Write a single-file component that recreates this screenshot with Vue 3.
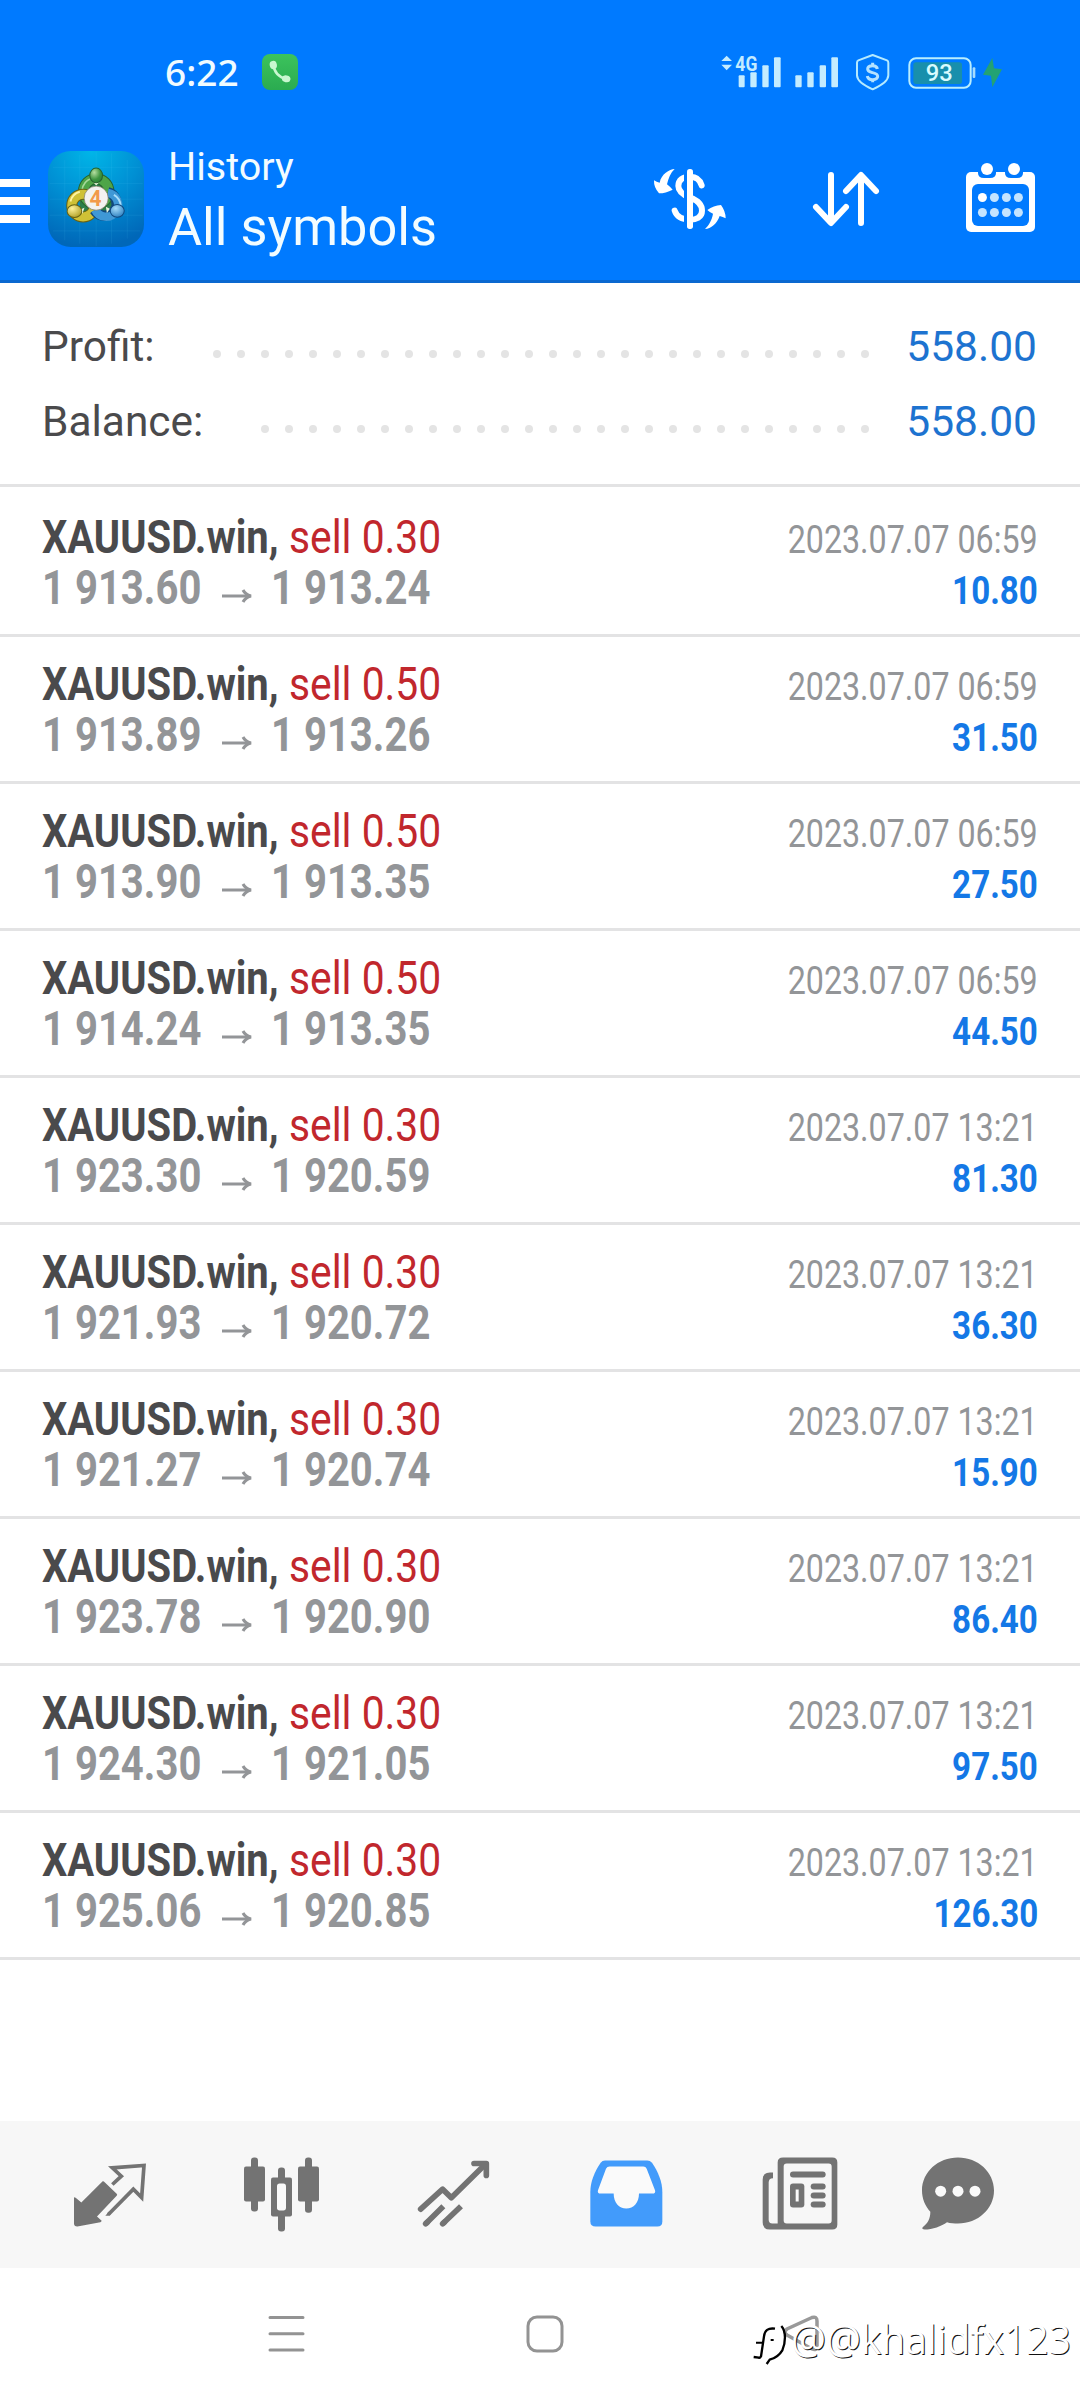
<script setup>
const summary = [
  { label: 'Profit:', value: '558.00', dots: 28 },
  { label: 'Balance:', value: '558.00', dots: 26 },
]

const deals = [
  ['0.30', '1 913.60', '1 913.24', '06:59', '10.80'],
  ['0.50', '1 913.89', '1 913.26', '06:59', '31.50'],
  ['0.50', '1 913.90', '1 913.35', '06:59', '27.50'],
  ['0.50', '1 914.24', '1 913.35', '06:59', '44.50'],
  ['0.30', '1 923.30', '1 920.59', '13:21', '81.30'],
  ['0.30', '1 921.93', '1 920.72', '13:21', '36.30'],
  ['0.30', '1 921.27', '1 920.74', '13:21', '15.90'],
  ['0.30', '1 923.78', '1 920.90', '13:21', '86.40'],
  ['0.30', '1 924.30', '1 921.05', '13:21', '97.50'],
  ['0.30', '1 925.06', '1 920.85', '13:21', '126.30'],
].map(([volume, open, close, time, profit]) => ({ volume, open, close, time, profit }))
</script>

<template>
  <div class="screen">
    <header class="header">
      <div class="status">
        <span class="clock">6:22</span>
        <svg class="call" width="36" height="36" viewBox="0 0 36 36">
          <defs>
            <linearGradient id="callBg" x1="0" y1="0" x2="0" y2="1">
              <stop offset="0" stop-color="#3cc35c" />
              <stop offset="1" stop-color="#2bab50" />
            </linearGradient>
          </defs>
          <rect width="36" height="36" rx="8" fill="url(#callBg)" />
          <path d="M11.5 10.5C12 18 17 23.5 25.5 25.5" fill="none" stroke="#c9f7d0" stroke-width="2.6" />
          <ellipse cx="11.3" cy="11" rx="3.6" ry="4.2" fill="#c9f7d0" transform="rotate(-12 11.3 11)" />
          <ellipse cx="24.2" cy="24.8" rx="4.3" ry="3.4" fill="#c9f7d0" transform="rotate(12 24.2 24.8)" />
        </svg>
        <div class="indicators">
          <svg width="63.33" height="40" viewBox="30 20 190 120" fill="#c4ecff">
            <path d="M50 31L66 47H34ZM34 58H66L50 75Z" />
            <text x="76" y="76" font-size="59" font-weight="700" textLength="66" lengthAdjust="spacingAndGlyphs">4G</text>
            <rect x="86" y="90" width="18" height="36" rx="3" />
            <rect x="121" y="81" width="19" height="45" rx="3" />
            <rect x="157" y="60" width="19" height="66" rx="3" />
            <rect x="192" y="36" width="20" height="90" rx="3" />
          </svg>
          <svg class="second" width="45.33" height="40" viewBox="252 20 136 120" fill="#c4ecff">
            <rect x="256" y="90" width="19" height="36" rx="3" />
            <rect x="292" y="81" width="19" height="45" rx="3" />
            <rect x="329" y="60" width="19" height="66" rx="3" />
            <rect x="364" y="36" width="20" height="90" rx="3" />
          </svg>
          <svg class="spaced" width="35.33" height="40" viewBox="436 20 106 120">
            <path d="M489 29L532 45Q536 47 536 52V90C536 108 512 122 489 132C466 122 442 108 442 90V52Q442 47 446 45Z" fill="none" stroke="#b5eaff" stroke-width="6" stroke-linejoin="round" />
            <path d="M503 71C502 63 496 61 489 61C480 61 474 65 474 71C474 79 483 80 489 82C497 84 504 86 504 93C504 100 497 103 489 103C480 103 474 99 473 92M489 52V62M489 102V111" fill="none" stroke="#b5e2ff" stroke-width="9" />
          </svg>
          <svg class="spaced" width="70" height="40" viewBox="590 20 210 120">
            <rect x="609" y="51" width="146" height="65" rx="8" fill="#188fac" />
            <rect x="597" y="39" width="184" height="88" rx="20" fill="none" stroke="#b9eeff" stroke-width="6" />
            <rect x="787" y="66" width="8" height="32" rx="3" fill="#a5dcff" />
            <text x="646" y="108" font-size="70" font-weight="500" fill="#d8fbff" textLength="81" lengthAdjust="spacingAndGlyphs">93</text>
          </svg>
          <svg class="bolt" width="21.67" height="40" viewBox="815 20 65 120">
            <path d="M846 38L818 88L842 91L846 126L875 72L851 69Z" fill="#23a274" />
          </svg>
        </div>
      </div>

      <div class="toolbar">
        <div class="menu"><i /><i /><i /></div>
        <svg class="logo" width="96" height="96" viewBox="55 63 287 287">
          <defs>
            <radialGradient id="tile" cx=".45" cy="0" r="1">
              <stop offset="0" stop-color="#00b6e8" />
              <stop offset=".5" stop-color="#0090d4" />
              <stop offset="1" stop-color="#0067b8" />
            </radialGradient>
            <radialGradient id="green" cx=".35" cy=".3" r=".8"><stop offset="0" stop-color="#b5dea0" /><stop offset=".6" stop-color="#3f9540" /><stop offset="1" stop-color="#257f35" /></radialGradient>
            <radialGradient id="gold" cx=".35" cy=".3" r=".8"><stop offset="0" stop-color="#fff29a" /><stop offset="1" stop-color="#aa991d" /></radialGradient>
            <radialGradient id="sky" cx=".4" cy=".3" r=".8"><stop offset="0" stop-color="#a5dcfa" /><stop offset="1" stop-color="#2378bb" /></radialGradient>
          </defs>
          <rect x="55" y="63" width="287" height="287" rx="68" fill="url(#tile)" />
          <path d="M105 90V330M150 75V340M199 65V348M245 70V340M292 90V325M70 112H330M60 160H338M60 207H338M60 255H338M70 302H330" stroke="#5fd0ff" stroke-opacity=".14" stroke-width="2" fill="none" />
          <path d="M199 150L250 200L250 250L199 240L150 250L150 200Z" fill="#2c7f4a" />
          <g fill="none">
            <circle cx="199" cy="184" r="38" stroke="#27632d" stroke-width="33" />
            <circle cx="199" cy="184" r="38" stroke="#4ea548" stroke-width="27" />
            <path d="M157 180A42 42 0 0 1 184 145" stroke="#a6d99a" stroke-width="5" />
            <circle cx="160" cy="226" r="34" stroke="#676112" stroke-width="33" />
            <circle cx="160" cy="226" r="34" stroke="#cfc136" stroke-width="27" />
            <path d="M122 214A40 40 0 0 1 150 185" stroke="#fff3a0" stroke-width="6" />
            <path d="M234 186A36 36 0 1 1 194 240" stroke="#10487e" stroke-width="31" />
            <path d="M234 188A36 36 0 1 1 196 239" stroke="#3f98d6" stroke-width="25" />
            <path d="M252 194A40 40 0 0 1 272 226" stroke="#a8ddfa" stroke-width="6" />
          </g>
          <path d="M190 156L199 166L209 156ZM146 240L164 233L158 250ZM240 236L228 230L231 248Z" fill="#e8f4d8" />
          <ellipse cx="199" cy="136" rx="19" ry="22" fill="url(#green)" stroke="#27632d" stroke-width="3" />
          <ellipse cx="134" cy="243" rx="22" ry="19" fill="url(#gold)" stroke="#676112" stroke-width="3" />
          <ellipse cx="262" cy="242" rx="21" ry="19" fill="url(#sky)" stroke="#10487e" stroke-width="3" />
          <circle cx="199" cy="204" r="36" fill="#f3f2f0" stroke="#77735a" stroke-width="2" />
          <text x="179" y="228" font-size="66" font-weight="700" fill="#f29a4a" textLength="36" lengthAdjust="spacingAndGlyphs">4</text>
        </svg>
        <div class="titles">
          <div class="subtitle"><span>History</span></div>
          <div class="title"><span>All symbols</span></div>
        </div>
        <div class="actions">
          <svg width="90" height="85" viewBox="15 15 270 255">
            <path d="M185 106C180 88 166 80 150 80C128 80 115 90 115 108C115 128 135 137 150 143C172 151 186 162 186 182C186 202 168 209 150 209C128 209 110 200 104 182" fill="none" stroke="#fff" stroke-width="18" stroke-linecap="round" />
            <rect x="132" y="50" width="12" height="180" fill="#007aff" />
            <rect x="141" y="57" width="18" height="180" rx="8" fill="#fff" />
            <path d="M104 57C88 58 64 72 59 98Q50 96 42 91Q41 112 57 130Q77 130 98 119Q91 111 81 103C85 85 92 68 104 57Z" fill="#fff" />
            <path d="M195 237C213 236 231 222 239 198Q248 200 257 205Q257 184 243 165Q221 166 202 180Q209 187 219 191C216 209 207 226 195 237Z" fill="#fff" />
          </svg>
          <svg width="90" height="85" viewBox="483 15 270 255" fill="none" stroke="#fff" stroke-width="18" stroke-linecap="round" stroke-linejoin="round">
            <path d="M573 75V218M528 171L573 219L618 171M663 219V76M618 123L663 75L708 123" />
          </svg>
          <svg class="calendar" width="90" height="85" viewBox="955 155 90 85">
            <rect x="966" y="172" width="69" height="60" rx="5" fill="#fff" />
            <path d="M978 171H996V173Q996 178 990 178H984Q978 178 978 173ZM1005 171H1023V173Q1023 178 1017 178H1011Q1005 178 1005 173Z" fill="#007aff" />
            <circle cx="987" cy="169" r="6" fill="#fff" />
            <circle cx="1014" cy="169" r="6" fill="#fff" />
            <rect x="972" y="184" width="57" height="42" rx="6" fill="#007aff" />
            <g fill="#c4e4ff">
              <circle cx="982.4" cy="197.5" r="4.5" fill="#fff" /><circle cx="994.4" cy="197.5" r="4.5" /><circle cx="1006.4" cy="197.5" r="4.5" /><circle cx="1018.4" cy="197.5" r="4.5" />
              <circle cx="982.4" cy="212.5" r="4.5" /><circle cx="994.4" cy="212.5" r="4.5" /><circle cx="1006.4" cy="212.5" r="4.5" /><circle cx="1018.4" cy="212.5" r="4.5" />
            </g>
          </svg>
        </div>
      </div>
    </header>

    <section class="summary">
      <div v-for="line in summary" :key="line.label" class="sum-line">
        <span class="sum-label">{{ line.label }}</span>
        <span class="dots"><i v-for="n in line.dots" :key="n" /></span>
        <span class="sum-value">{{ line.value }}</span>
      </div>
    </section>

    <main class="list">
      <article v-for="(deal, i) in deals" :key="i" class="deal">
        <div class="line">
          <span class="name"><b>XAUUSD.win,</b></span>
          <span class="side">sell {{ deal.volume }}</span>
          <time class="time">2023.07.07 {{ deal.time }}</time>
        </div>
        <div class="line">
          <span class="price open">{{ deal.open }}</span>
          <svg class="arrow" width="31" height="14" viewBox="0 0 31 14" fill="none" stroke="#939598" stroke-width="3">
            <path d="M0 7H27" /><path d="M21 1C22.500 4 25 6 29 7C25 8 22.500 10 21 13" />
          </svg>
          <span class="price close">{{ deal.close }}</span>
          <span class="gain">{{ deal.profit }}</span>
        </div>
      </article>
    </main>

    <nav class="tabs">
      <div class="tab">
        <svg viewBox="24 37.5 252 252">
          <path d="M129 122Q132 122 134 125L170 160Q173 163 170 166L111 228L125 241Q125 244 121 245L52 258Q42 258 42 249V170L47 172L64 186L125 125Q127 122 129 122Z" />
          <path d="M157 132L184 107L157 82L252 75L245 171L220 146L145 222" fill="none" stroke="#737373" stroke-width="11" />
          <path d="M136 226H148L154 218L146 214Z" />
        </svg>
      </div>
      <div class="tab">
        <svg viewBox="540 37.5 252 252">
          <rect x="573" y="51" width="21" height="162" rx="9" /><rect x="552" y="78" width="63" height="105" rx="6" />
          <rect x="735" y="51" width="21" height="166" rx="9" /><rect x="714" y="78" width="63" height="105" rx="6" />
          <rect x="654" y="81" width="21" height="192" rx="9" /><rect x="633" y="111" width="63" height="117" rx="6" />
          <rect x="651" y="129" width="27" height="81" rx="8" fill="#fafafa" />
        </svg>
      </div>
      <div class="tab">
        <svg viewBox="1056 37.5 252 252" fill="none" stroke="#737373" stroke-width="17" stroke-linecap="round" stroke-linejoin="round">
          <path d="M1082 206L1148 146L1174 172L1276 71" /><path d="M1242 69H1279V105" />
          <path d="M1097 250L1150 197M1148 250L1203 197" stroke-linecap="butt" />
          <path d="M1097 250L1102 245M1148 250L1153 245" />
        </svg>
      </div>
      <div class="tab">
        <svg viewBox="12 37.5 252 252">
          <path fill="#429bfb" d="M75 60H202Q210 60 216 67C235 95 247 125 247 155V243Q247 258 232 258H47Q31 258 31 243V155C31 125 43 95 62 67Q67 60 75 60Z" />
          <path fill="#fafafa" d="M89 78H190Q197 78 200 85L225 149Q228 159 217 159H177C177 187 161 204 139 204C117 204 101 187 101 159H62Q51 159 54 149L78 85Q81 78 89 78Z" />
        </svg>
      </div>
      <div class="tab">
        <svg viewBox="528 37.5 252 252">
          <path fill-rule="evenodd" d="M609 51H757Q772 51 772 66V252Q772 267 757 267H570Q548 267 548 245V118Q548 96 570 96H579V113Q566 113 566 126V238Q566 249 577 249H593V66Q593 51 609 51ZM620 69Q611 69 611 78V240Q611 249 620 249H746Q755 249 755 240V78Q755 69 746 69Z" />
          <rect x="630" y="93" width="107" height="18" rx="9" /><rect x="630" y="129" width="43" height="72" rx="9" />
          <rect x="647" y="147" width="9" height="36" fill="#fafafa" />
          <rect x="692" y="129" width="45" height="18" rx="9" /><rect x="692" y="156" width="45" height="18" rx="9" /><rect x="692" y="183" width="45" height="18" rx="9" />
        </svg>
      </div>
      <div class="tab last">
        <svg viewBox="1008 37.5 252 252">
          <path d="M1134 51C1194 51 1242 95 1242 150C1242 205 1194 249 1134 249C1123 249 1111 248 1101 245C1085 257 1057 267 1034 267Q1024 266 1028 260C1042 250 1051 236 1051 214C1035 196 1026 174 1026 150C1026 95 1074 51 1134 51Z" />
          <circle cx="1082" cy="152" r="16.500" fill="#fafafa" /><circle cx="1134" cy="152" r="16.500" fill="#fafafa" /><circle cx="1185" cy="152" r="16.500" fill="#fafafa" />
        </svg>
      </div>
    </nav>

    <footer class="system">
      <svg class="recents" width="38" height="38" viewBox="0 0 38 38" stroke="#939393" stroke-width="3" stroke-linecap="round"><path d="M2 2.500H35M2 18.700H35M2 35H35" /></svg>
      <svg class="home" width="38" height="38" viewBox="0 0 38 38"><rect x="2" y="2" width="34" height="34" rx="9" fill="none" stroke="#939393" stroke-width="3" /></svg>
      <svg class="back" width="38" height="38" viewBox="0 0 38 38"><path d="M29 2.500L4 14Q0 17 4 20L29 34Q34 36 34 31V6Q34 1 29 2.500Z" fill="none" stroke="#999" stroke-width="3.500" /></svg>
      <div class="watermark">
        <svg width="36" height="42" viewBox="36 40 108 126" fill="none">
          <path d="M105 57C84 54 74 62 72 80L63 140Q60 146 56 144L41 142" stroke="#000" stroke-width="7" />
          <path d="M48 99H70M92 91H101" stroke="#000" stroke-width="6" />
          <path d="M124 49C139 66 137 98 127 122C118 137 104 146 89 150L80 163" stroke="#000" stroke-width="7" />
        </svg>
        <span class="handle">@@khalidfx123</span>
      </div>
    </footer>
  </div>
</template>

<style>
body { margin: 0; background: #fff; }
</style>

<style scoped>
.screen { width: 1080px; height: 2400px; display: flex; flex-direction: column; overflow: hidden; background: #fff; font-family: Roboto, "Liberation Sans", sans-serif; }
.screen svg { display: block; flex: none; }
.header { box-sizing: border-box; height: 283px; flex: none; background: #007aff; border-bottom: 3px solid #0b68d0; display: flex; flex-direction: column; }
.status { height: 144px; display: flex; align-items: center; padding-left: 165px; box-sizing: border-box; }
.clock { width: 97px; font-family: "Noto Sans", sans-serif; font-weight: 500; font-size: 37px; line-height: 44px; color: #f0fbff; white-space: nowrap; }
.indicators { display: flex; margin-left: auto; padding-right: 76.700px; }
.second { margin-left: 10.670px; }
.spaced { margin-left: 16px; }
.bolt { margin-left: 5px; }
.toolbar { display: flex; height: 136px; }
.menu { display: flex; flex-direction: column; gap: 10px; padding-top: 35px; width: 48px; }
.menu i { width: 30px; height: 8px; background: #fff; }
.logo { margin-top: 7px; }
.titles { margin-left: 24px; width: 476px; color: #f2fcff; white-space: nowrap; }
.titles span { display: inline-block; transform-origin: left; }
.subtitle { font-size: 39.500px; line-height: 46px; }
.title { font-size: 51px; line-height: 60px; margin-top: 8px; }
.title span { transform: scaleX(1.025); }
.actions { display: flex; gap: 66px; margin-top: 11px; margin-left: 1px; }
.calendar { margin-left: -2px; }
.summary { box-sizing: border-box; height: 204px; flex: none; padding: 26px 43px 0 42px; border-bottom: 3px solid #e3e3e4; }
.sum-line { display: flex; height: 75px; align-items: center; font-size: 42px; line-height: 75px; color: #4a4a4c; }
.sum-label { transform: scaleX(1.01); transform-origin: left; }
.dots { display: flex; gap: 16px; margin-left: auto; padding-top: 14px; }
.dots i { width: 8px; height: 8px; border-radius: 50%; background: #e4e4e4; }
.sum-value { width: 168px; text-align: right; color: #1d73d0; transform: scaleX(1.012); transform-origin: right; }
.list { padding-top: 3px; flex: 1; }
.deal { box-sizing: border-box; height: 147px; padding: 21px 42px 0; border-bottom: 3px solid #e3e3e4; }
.line { display: flex; align-items: baseline; height: 51px; line-height: 51px; white-space: nowrap; }
.name { width: 247px; font-size: 47px; color: #4a4a4c; transform: scaleX(.85); transform-origin: left; }
.side { font-size: 47px; color: #c1272d; transform: scaleX(.868); transform-origin: left; }
.time { margin-left: auto; font-size: 39px; color: #939598; transform: scaleX(.826); transform-origin: right; }
.price { font-size: 48px; font-weight: 700; color: #939598; transform: scaleX(.834); transform-origin: left; }
.open { width: 180px; }
.close { width: 180px; }
.arrow { margin-right: 18px; position: relative; top: -1px; }
.gain { margin-left: auto; font-size: 39px; font-weight: 700; color: #1478e6; transform: scaleX(.85); transform-origin: right; }
.tabs { height: 147px; flex: none; background: #f7f7f7; padding-left: 24px; display: flex; align-items: center; }
.tab { width: 172px; display: flex; justify-content: center; }
.tab.last { width: 148px; }
.tab svg { width: 84px; height: 84px; fill: #737373; }
.tab svg[fill="none"] { fill: none; }
.system { position: relative; height: 132px; flex: none; display: flex; align-items: flex-start; padding: 47px 0 0 268px; box-sizing: border-box; }
.home { margin-left: 220px; }
.back { margin-left: 219px; }
.watermark { position: absolute; left: 752px; top: 55px; display: flex; }
.handle { margin-left: 3px; margin-top: -11px; font-family: "Open Sans", "Noto Sans", sans-serif; font-size: 40px; line-height: 54px; color: #fff; text-shadow: 1px 1px 0 #111; white-space: nowrap; transform: scaleX(.974); transform-origin: left; }
</style>
